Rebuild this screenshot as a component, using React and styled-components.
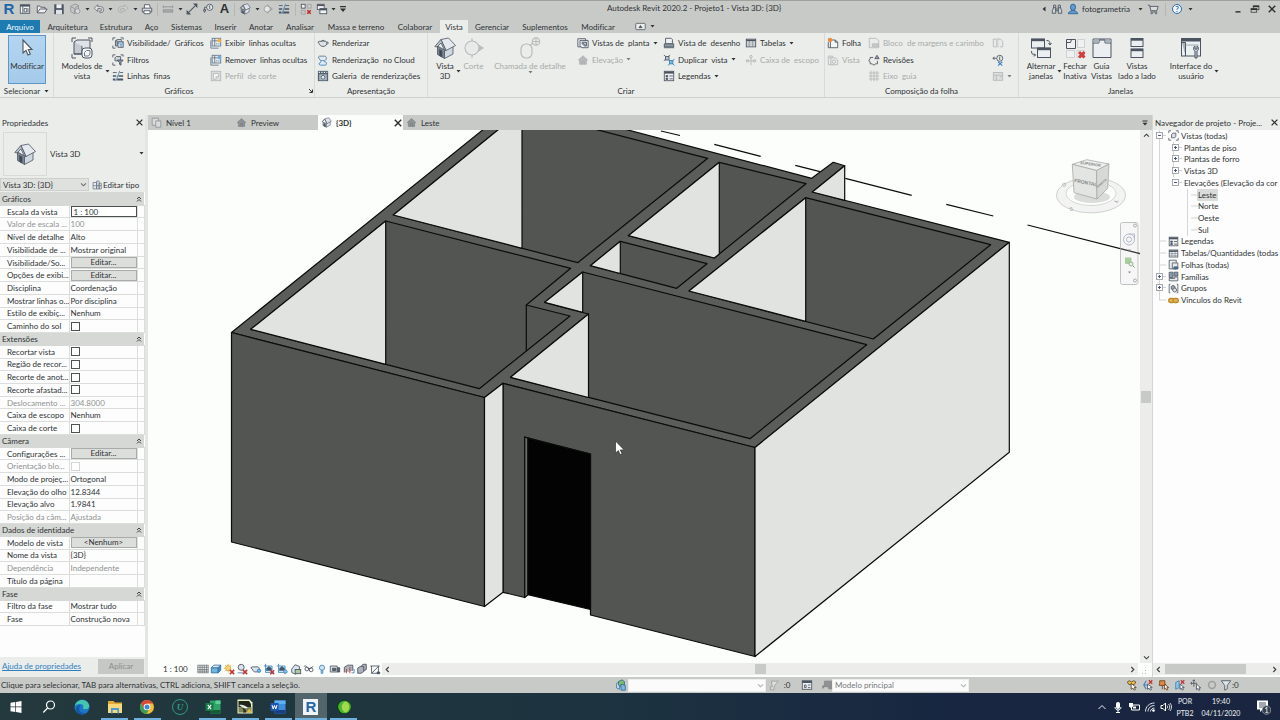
import React from 'react';
import styled, { createGlobalStyle, css } from 'styled-components';

const Global = createGlobalStyle`
  *, *::before, *::after { box-sizing: border-box; }
  body {
    margin: 0;
    background: #c8cac8;
    color: #2f3234;
    font-family: Lato, "Open Sans", "Noto Sans", sans-serif;
    font-size: 8px;
    font-variant-ligatures: none;
    line-height: 10px;
  }
  button, input, select { font: inherit; color: inherit; font-variant-ligatures: none; }
  button { margin: 0; padding: 0; border: 0; background: none; }
`;

/* ---------- icons ---------- */

const ink = '#4b5460';
const blue = '#3d83bd';
const pale = '#b4b8b8';

const HouseShape = ({ c = ink, f = '#dfe5ec', d = '#8d97a5' }) => (
  <g stroke={c} strokeWidth="0.7" strokeLinejoin="round">
    <path d="M2.5 6.5v4.3l4.3 2.2V8.2z" fill={d} />
    <path d="M6.8 8.2V13l5-2.6V6z" fill={f} />
    <path d="M1.2 6.2 4.8 2.2 10 1l3.2 4.4-5.6 2.9L5 3z" fill={f} />
    <path d="M4.8 2.4 7.4 8.2" fill="none" />
    <path d="M4 9v2.5l1.2.6V9.6z" fill={c} />
  </g>
);

const PageShape = ({ c = ink }) => (
  <path d="M4 3.5h5.5L12.5 6v6.5H4z M9.5 3.5V6h3" fill="#f4f6f6" stroke={c} strokeWidth="1" />
);

const icons = {
  recent: [14, <g fill="none" stroke={ink}><rect x="1.5" y="2" width="11" height="10" fill="#f3f5f6" /><path d="M1.5 3.2h11" strokeWidth="2" /><path d="M4.5 4v8M6 6.5h3v4H6zM10.5 6v5" /></g>],
  open: [14, <g stroke={ink} fill="#eef0f1"><path d="M1.5 11.5V3.5h3l1 1.5h5v2" /><path d="M1.5 11.5 4.5 7h8.500l-3 4.500z" /></g>],
  save: [14, <g><path d="M1.5 1.500h11v11.500h-11z" fill={ink} /><path d="M4 1.500h6V6H4z" fill="#eef0f1" /><path d="M3.500 8h7v5h-7z" fill="#dfe3e5" /></g>],
  cube: [14, <g fill="none" stroke="#8f9497"><path d="M2 4 7 1l4 2v6l-4.500 3.500L2 10z" fill="#c3c7c7" /><path d="M2 4l4.500 2.500L11 3M6.500 6.500v6" /><circle cx="10" cy="9.500" r="2.800" fill="#d9dbdb" /></g>],
  undo: [14, <path d="M1.500 6l4-4v2.300H9a3.400 3.400 0 0 1 0 7H8V9.300h1a1.400 1.400 0 0 0 0-2.800H5.500V10z" fill="#e9ebeb" stroke="#5c646c" strokeWidth="0.9" />],
  redo: [14, <path d="M12.500 6l-4-4v2.300H5a3.400 3.400 0 0 0 0 7h1V9.300H5a1.400 1.400 0 0 1 0-2.800h3.500V10z" fill="#d2d4d3" stroke="#a4a8a9" strokeWidth="0.9" />],
  print: [14, <g stroke={ink}><path d="M4 6V2h6l.8 4" fill="#fff" /><path d="M1.5 6h11v4.500h-11z" fill="#d7dbdd" /><path d="M3.500 9h7v3.500h-7z" fill="#fff" /></g>],
  measure: [14, <g stroke="#8b9093" fill="none"><path d="M1.500 4.500h11M1.500 3v3M12.500 3v3" /><rect x="1.500" y="8" width="11" height="2.600" fill="#a9adad" /></g>],
  dimension: [14, <g stroke={ink} fill={ink}><path d="M3 11 11 3" strokeWidth="1.200" /><path d="M1.500 10 4 12.500H1.500zM10 1.500h2.500V4z" strokeWidth="1.600" /></g>],
  tag: [14, <g stroke={ink} fill="none"><circle cx="9" cy="5" r="3.600" fill="#e8ebec" /><path d="M9 3v4M8 4l1-1M5.500 5H3v3.500M1.500 8 3 11 4.500 8z" /></g>],
  house: [14, <HouseShape />],
  homeTab: [14, <path d="M1.500 7 7 2l5.500 5H11v5H3V7z M6 12V8.500h2.400V12" fill="#8d9295" stroke="#74797c" strokeWidth="0.7" />],
  homePale: [14, <path d="M1.500 7 7 2l5.500 5H11v5H3V7z M6 12V8.500h2.400V12" fill="#b6baba" stroke="#a5a9a9" strokeWidth="0.7" />],
  diamond: [14, <g fill="none" stroke="#979c9d"><path d="M6 2l6 5-6 5" fill="#aeb2b2" /><circle cx="6" cy="7" r="3.600" fill="#e4e6e5" /></g>],
  thin: [14, <g stroke={ink}><path d="M1 3h4.500M9 3h4" strokeWidth="1" /><path d="M1 7h4M7.500 7H13" strokeWidth="1.800" /><path d="M1 11h3M6 11h7" strokeWidth="2.400" /><path d="M9 1 4.500 13" stroke={blue} strokeWidth="1" /></g>],
  closeWin: [14, <g fill="none" stroke={ink}><rect x="1.500" y="1.500" width="4.500" height="4.500" fill="#eef0f0" /><path d="M8.500 1.500H13V6H8.500zM1.500 8.500H6V13H1.500z" stroke="#9ba0a2" /><path d="m8.500 8.500 4 4m0-4-4 4" stroke="#c62828" strokeWidth="1.800" /></g>],
  switchWin: [14, <g fill="#f1f3f3" stroke={ink}><rect x="1.500" y="1.500" width="8" height="6" /><path d="M1.500 2.700h8" strokeWidth="1.800" /><rect x="4.500" y="6.500" width="8" height="6" /><path d="M4.500 7.700h8" strokeWidth="1.800" /></g>],
  customize: [14, <g fill="#2f3234"><path d="M3.500 3.500h7v1.400h-7zM3.500 6.500h7L7 10.500z" /></g>],
  binoculars: [14, <g fill="#ccd1d3" stroke={ink}><path d="M3 2.500h2.500V6H3zM8.500 2.500H11V6H8.500z" /><path d="M3 5.500 1.500 9v3h4V5.500zM11 5.500 12.500 9v3h-4V5.500z" /><path d="M5.500 7h3v2h-3z" /></g>],
  user: [14, <g fill="#5f9cd0" stroke="#2d5f93"><path d="M1.500 12.500c0-2.500 3-3 4-3.300V8h3v1.200c1 .3 4 .8 4 3.300z" /><ellipse cx="7" cy="5" rx="3" ry="3.700" /></g>],
  cart: [14, <g fill="#d8dcdd" stroke={ink}><path d="M1 2.500h2l1.500 6.500h7L13 4H3.500" /><path d="M4 10.500h8" /><circle cx="5.500" cy="12" r=".8" /><circle cx="10.500" cy="12" r=".8" /></g>],
  filterVG: [14, <g fill="none" stroke={ink}><path d="M1 4V1h3M10 1h3v2M1 10v3h3" /><path d="M4 4.500 6 3h5v1.500M4 4.500h2v6H4z" fill="#c9d3dc" /><rect x="7" y="5.500" width="6" height="6.500" fill="#eef1f4" /><path d="M7 7h6M9 9h3M9 10.700h3" stroke={blue} /></g>],
  filter: [14, <g fill="none" stroke={ink}><path d="M1 4V1h3M10 1h3v2M1 10v3h3" /><path d="M3.500 4.500 5 3h5v5H3.500z" fill="#cfd6dc" /><path d="M6 7h7L10.500 10v3L8.800 12v-2z" fill="#8694a4" /></g>],
  showLines: [14, <g fill="none" stroke="#60758a"><rect x="2.500" y="1.500" width="10" height="9" /><path d="M1 4v9h9M2.500 4.500h10M5.500 1.500v9" /><path d="M7 8h5" stroke={blue} strokeDasharray="1.500 1" /><circle cx="11" cy="4" r="2.200" fill="#f2ad3c" stroke="none" /></g>],
  hideLines: [14, <g fill="none" stroke="#60758a"><rect x="2.500" y="1.500" width="10" height="9" /><path d="M1 4v9h9M2.500 4.500h10M5.500 1.500v9" /><path d="M7 8h5" stroke={blue} strokeDasharray="1.500 1" /><circle cx="11" cy="4" r="2.200" fill="#74add8" stroke="none" /></g>],
  cutProfile: [14, <g fill="none" stroke={pale}><rect x="1.500" y="1.500" width="11" height="11" fill="#dcdedd" /><path d="M4 11V4h6v4H7v3z" fill="#f3f4f3" /></g>],
  render: [14, <g fill="#dce2e7" stroke={ink}><path d="M3 5h7c.8 0 1.500 1 1.500 2.500S10 11 7 11 3 9 2.500 7.500L1 6zM11 6c1.500-.5 2 0 2 1s-1 1.500-2 1.500" /><path d="M5 5c0-1.500 4-1.500 4 0" /></g>],
  cloud: [14, <g fill="#dfeaf4" stroke="#56718d"><path d="M3 2.500h6c1 0 2 1.200 2 2.500S9 8.500 7 8.500 3.500 7.500 3 6L1.500 3.500z" /><path d="M4 13c-2 0-2-3 0-3 0-2.500 4-3.500 4.500-1 3-.7 3.500 4 1 4z" stroke={blue} /></g>],
  gallery: [14, <g><path d="M1 1h12v12H1z" fill="#53616f" /><path d="M2 2h1.500v1.500H2zM5 2h1.500v1.500H5zM8 2h1.500v1.500H8zM11 2h1v1.500h-1z" fill="#e6eaec" /><path d="M2.500 5h9v7h-9z" fill="#a9b5c0" /><circle cx="7" cy="8.500" r="2.200" fill="#e6eaec" stroke="#53616f" /></g>],
  plan: [14, <g fill="#eef1f3" stroke={ink}><path d="M1 2h9v9.500H1z" /><path d="M3.500 4H13v8.500H5.500L3.500 10z" /><path d="M6 6h5v4.500H9L6 8z" fill="#b7c3cd" /><path d="m6 6 4.500 4.500" stroke="#617080" /></g>],
  drafting: [14, <g fill="#eef1f3" stroke={ink}><path d="M3 1.500h6.500L11 3v5H3z" /><path d="M1.500 8h11v3.500h-11z" fill="#8e9aa6" /><path d="M1 12.500h12" /></g>],
  duplicate: [14, <g fill="none" stroke={ink}><path d="m1 1 2.500 2.500M8 1 6 3.500M1 8l2-2" /><rect x="3" y="3" width="4" height="4" fill="#b8c4cf" /><rect x="7.500" y="7.500" width="4" height="4" fill="#7cb4e0" stroke={blue} /><path d="m13.500 6-2 1.500M6 13.500l1.500-2M13.500 13.500l-2-2M6 6l1.500 1.500" stroke={blue} /></g>],
  legend: [14, <g fill="#eef1f3" stroke={ink}><rect x="1.500" y="1.500" width="11" height="11" /><path d="M1.500 3h11" strokeWidth="2.400" /><path d="M3.500 6.500h2v1.500h-2zM3.500 9.500h2V11h-2z" fill={ink} /><path d="M7.500 7h4M7.500 10.300h4" /></g>],
  table: [14, <g fill="#eef1f3" stroke={ink}><rect x="1.500" y="2.500" width="11" height="9" /><path d="M1.500 4h11" strokeWidth="2" /><path d="M5 4v7.500M1.500 7h11M1.500 9.300h11M9 4v7.500" strokeWidth="0.500" /></g>],
  scopeBox: [14, <g fill="none" stroke={pale}><path d="M1 8h12M7 3v10" /><circle cx="3" cy="8" r="1.500" /><circle cx="11" cy="8" r="1.500" /><circle cx="7" cy="3" r="1.500" /></g>],
  sheet: [14, <g><PageShape /><path d="M1.500 6v6.500H4" stroke={ink} fill="none" /><circle cx="3.500" cy="3.500" r="2.600" fill="#f08a3c" /></g>],
  viewPale: [14, <g fill="#e9ebea" stroke={pale}><path d="M1.500 2.500h5v2h-5zM1.500 5v7.500h7" /><path d="M4.500 4.500h5l3 2.500v5.500h-8z" /><circle cx="8" cy="9" r="2" /></g>],
  titleBlock: [14, <g fill="#e9ebea" stroke={pale}><path d="M1.500 1.500h8l3 3v8h-11z" /><path d="M5 8h7v3H5z" fill="#c8cbca" /></g>],
  revision: [14, <g fill="none" stroke={ink}><path d="M6 4H2.500v2c-2 .8-2 2.500 0 3v2.500H5c.8 1.800 2.800 1.800 3.500 0H11V8" /><path d="m10.500 1.500 2.500 4H8z" fill="#9aa3ac" /></g>],
  guideGrid: [14, <path d="M3.500 1v12M7 1v12M10.500 1v12M1 3.500h12M1 7h12M1 10.500h12" fill="none" stroke={pale} />],
  matchPale: [14, <g fill="#e9ebea" stroke={pale}><path d="M1.500 2.500h4v9h-4zM7 2.500h3l2.500 2.500v6.500H9" /><path d="M7 1v12" strokeDasharray="2 1" /></g>],
  viewRef: [14, <g fill="none" stroke={ink}><path d="M1 5h4M3 3.500 1 5l2 1.500" /><circle cx="9" cy="5" r="3.500" /><path d="M9 3v4" /><path d="m7 9 5 4.500M12 9l-5 4.500" stroke={blue} strokeWidth="1.300" /></g>],
  viewportPale: [14, <g fill="#dddfde" stroke={pale}><rect x="1.500" y="3" width="11" height="9" /><path d="M1.500 6h11M5 6v6M9 8h3" /></g>],
  x: [14, <path d="m2.500 2.500 9 9m0-9-9 9" stroke="#2c2e30" strokeWidth="2" />],
  minimize: [14, <path d="M3.500 11h7" stroke="#2c2e30" strokeWidth="2" />],
  restore: [14, <g fill="none" stroke="#2c2e30"><rect x="4.500" y="2.500" width="8" height="5.500" /><path d="M4.500 3.500h8" strokeWidth="1.800" /><rect x="1.500" y="6.500" width="8" height="5" fill="#c8cac8" /><path d="M1.500 7.500h8" strokeWidth="1.800" /></g>],
  planTab: [14, <g fill="#d9dcdc" stroke="#8a8f92"><path d="M1.500 1.500h8v9h-8z" /><path d="M6 5h6.500v8H6z" /></g>],
  panelToggle: [14, <g fill="none" stroke="#4b5460"><rect x="1" y="3" width="12" height="8" rx="1" fill="#eceeed" /><path d="M5 8.500 7 5.800l2 2.700z" fill="#4b5460" /></g>],
  cursor: [22, <path d="M7 3v13l3-2.600 2 4.600 2.300-1-2-4.500H16z" fill="#fff" stroke="#50555b" strokeWidth="1.100" />],
  viewTemplate: [22, <g fill="none" stroke={ink}><path d="M1 5V1h4M17 1h4v4M1 17v4h4" /><path d="M3 5v12h8V5z" fill="#c3cad1" /><path d="M3 5l3-2h13v10M3 17h9" fill="#dfe3e7" /><rect x="11" y="11" width="10" height="10" rx="3" fill="#f4f6f7" /><path d="m13.500 15.500 2-2h3.500v3.500l-1.500 2h-4z" stroke="#707a84" /></g>],
  bigHouse: [22, <g stroke={ink} strokeWidth="0.800" strokeLinejoin="round"><path d="M3.500 9v8.500l7 4V13z" fill="#7d8896" /><path d="M10.500 13v8.500l8.500-4.500V9z" fill="#cfd8e2" /><path d="M7 2.500 14.500 1 21.500 8.500 12 13.500z" fill="#e4e9ef" /><path d="m.8 9.500 6-7 5.200 11-1.500-.3L7 6l-4 4z" fill="#b8c2ce" /><path d="M5.500 12.500v6l2.500 1.400v-6z" fill="#3e4650" /></g>],
  section: [22, <g stroke="#b9bcbb" strokeWidth="1.100"><path d="M9 1v3l11 7-11 7v3" fill="#bec1c0" /><circle cx="9" cy="11" r="7" fill="#e8eae9" /></g>],
  callout: [22, <g fill="none" stroke="#b9bcbb" strokeWidth="1.200"><rect x="2" y="7" width="11" height="14" rx="5" /><circle cx="17" cy="4.500" r="3.700" /><path d="M11 8.500 14 6M13.500 4.500h7M17 1v7" /></g>],
  swapWin: [22, <g fill="#eceff1" stroke={ink}><rect x="1.500" y="2" width="13" height="9" /><path d="M1.500 3h13" strokeWidth="2.400" /><rect x="7.500" y="11" width="13" height="9.500" /><path d="M7.500 12h13" strokeWidth="2.400" /><path d="M16.500 3.500c3 0 3.500 1 3.500 4M1.500 14c0 3 1 4 4 4M18.500 6l1.500 2 1.500-2M4 16.500 5.500 18 4 19.500" fill="none" /></g>],
  closeInactive: [22, <g fill="#eef0f1" stroke={ink}><path d="M2.500 2.500h9v9h-9z" /><path d="M2.500 5.500h4l1-3" fill="none" /><path d="M13.500 2.500h7v8h-7zM2.500 13.500h8v7h-8zM13 13.500h7.500v7H13z" stroke="#cdd1d2" /><path d="m15 15 5.500 5.500m0-5.500L15 20.500" stroke="#cf3c3c" strokeWidth="3" /></g>],
  tabViews: [22, <g fill="#eceff1" stroke={ink}><path d="M2 2h18v18.500H2z" /><path d="M2 6h6V3h6v3h6" fill="none" /><path d="M2.500 2.500H8V5.500H2.500zM14.500 2.500h5v3h-5z" fill="#aab2ba" stroke="none" /></g>],
  tileViews: [22, <g fill="#eceff1" stroke={ink}><rect x="5" y="1.500" width="12" height="8" /><path d="M5 2.500h12" strokeWidth="2.400" /><rect x="5" y="12" width="12" height="8.500" /><path d="M5 13h12" strokeWidth="2.400" /></g>],
  userInterface: [22, <g fill="#eef1f3" stroke={ink}><rect x="1.500" y="1.500" width="19" height="17.500" /><path d="M1.500 3h19" strokeWidth="3" /><path d="M2 5.500h3.500V19" fill="#a9b3bd" /><path d="M5.500 8h13" stroke="#9aa5b0" /><path d="M15 21v-7c-2-1-2-4 0-5v3h2V9c2 1 2 4 0 5v7z" fill="#c9d4df" /></g>],
  typeEdit: [14, <g fill="#e7edf2" stroke="#607080"><path d="M1.500 3.500h5v9h-5zM6.500 1.500H10v11H6.500zM10 4.500h3v8h-3z" /><path d="M1.500 8H13" /></g>],
  views: [14, <g fill="none" stroke={ink}><path d="M1 4V1h3M10 1h3v3M1 10v3h3M10 13h3v-3" /><path d="M4.500 6 6 4h4v4L8.500 10h-4z" fill="#dbe0e5" /></g>],
  sheets: [14, <g fill="#e7ebee" stroke={ink}><path d="M1.500 1.500h9v11h-9z" /><path d="M5.500 5h7v7.500h-7z" /><path d="M7.500 10h5v2.500h-5z" fill={blue} /></g>],
  families: [14, <g fill="#8b99a8" stroke={ink}><path d="M1.500 1.500h5v7h-5zM8 1.500h4.500v5H8z" /><path d="M1.500 9.500h7v-2h4v5h-11z" fill="#e7ebee" /></g>],
  groups: [14, <g fill="#9aa6b2" stroke={ink}><path d="M3 1.500H1.500v11H3M11 1.500h1.500v11H11" fill="none" /><path d="M4 4.500 6.500 3 9 4.500v3L6.500 9 4 7.500z" /><circle cx="8.500" cy="9" r="2.500" fill="#dbe0e5" /></g>],
  links: [14, <g fill="#e3b65a" stroke="#c08a28" strokeWidth="1.800"><rect x="1" y="4.500" width="6.500" height="5" rx="2" /><rect x="6.500" y="4.500" width="6.500" height="5" rx="2" /></g>],
};

const Svg = styled.svg`
  display: block;
  flex: none;
  width: ${(p) => p.$s}px;
  height: ${(p) => p.$s}px;
`;

const Icon = ({ name, size = 12 }) => {
  const [box, art] = icons[name];
  return (
    <Svg $s={size} viewBox={`0 0 ${box} ${box}`} aria-hidden="true">{art}</Svg>
  );
};

const CaretSvg = styled.svg`
  display: block;
  flex: none;
  width: 5px;
  height: 3px;
  opacity: ${(p) => (p.$dim ? 0.6 : 1)};
`;
const Caret = ({ dim }) => (
  <CaretSvg viewBox="0 0 5 3" $dim={dim} aria-hidden="true"><path d="M0.500 0h4L2.500 2.500z" fill="#2f3234" /></CaretSvg>
);

const ChevSvg = styled.svg`
  display: block;
  flex: none;
  width: 7px;
  height: 7px;
  transform: rotate(${(p) => p.$turn}deg);
`;
const Chevron = ({ turn = 0, color = '#3c3f41' }) => (
  <ChevSvg viewBox="0 0 7 7" $turn={turn} aria-hidden="true"><path d="m1 2.300 2.500 2.500L6 2.300" fill="none" stroke={color} strokeWidth="1.100" /></ChevSvg>
);

/* ---------- shell ---------- */

const Shell = styled.div`
  display: flex;
  flex-direction: column;
  height: 100vh;
  min-height: 600px;
  border-top: 1px solid #9fa19f;
  overflow: hidden;
`;

const TitleBar = styled.header`
  display: flex;
  align-items: center;
  height: 16px;
  flex: none;
`;

const QuickAccess = styled.div`
  display: flex;
  align-items: center;
  width: 350px;
  padding-left: 1px;
`;

const ToolButton = styled.button`
  display: flex;
  align-items: center;
  justify-content: center;
  flex: none;
  width: ${(p) => p.$w}px;
  height: 16px;
`;

const ToolRule = styled.span`
  flex: none;
  width: 1px;
  height: 13px;
  margin: 0 2px;
  background: #b5b7b5;
`;

const LogoLetter = styled.span`
  color: #1f66a8;
  font: bold 15px/16px "Liberation Sans", sans-serif;
`;

const LetterA = styled.span`
  font: bold 13px/14px "Liberation Sans", sans-serif;
`;

const WindowTitle = styled.h1`
  flex: 1;
  margin: 0;
  padding-bottom: 3px;
  font-size: 8px;
  font-weight: 400;
  text-align: center;
  white-space: nowrap;
`;

const Account = styled.div`
  display: flex;
  align-items: center;
  width: 242px;
`;

const UserName = styled.span`
  width: 56px;
  padding-left: 1px;
`;

const HelpMark = styled.span`
  width: 10px;
  height: 10px;
  border: 1px solid #2d6ba6;
  border-radius: 50%;
  background: #f3f7fa;
  color: #2d6ba6;
  font-weight: 700;
  line-height: 8px;
`;

const Push = styled.span`
  flex: 1;
`;

const MenuTabs = styled.nav`
  display: flex;
  align-items: stretch;
  height: 16px;
  padding-top: 3px;
  flex: none;
`;

const MenuTab = styled.button`
  width: ${(p) => p.$w}px;
  flex: none;
  white-space: nowrap;
  display: flex;
  align-items: center;
  justify-content: center;
  ${(p) => p.$kind === 'file' && css`background: #1c7bb0; color: #f1f7fb;`}
  ${(p) => p.$kind === 'active' && css`background: #ebedeb;`}
`;

const MenuExtra = styled.button`
  display: flex;
  align-items: center;
  gap: 4px;
  margin-left: 13px;
`;

/* ---------- ribbon ---------- */

const Ribbon = styled.div`
  display: flex;
  flex: none;
  height: 65px;
  background: #ebedeb;
  border-bottom: 1px solid #cfd1cf;
`;

const OptionsBar = styled.div`
  flex: none;
  height: 17px;
  background: #ebedeb;
`;

const Group = styled.section`
  display: flex;
  flex-direction: column;
  flex: none;
  width: ${(p) => p.$w}px;
  border-right: 1px solid ${(p) => (p.$last ? 'transparent' : '#d9dbd9')};
`;

const GroupBody = styled.div`
  display: flex;
  height: 52px;
  padding: 2px 0 0 ${(p) => p.$pad || 0}px;
`;

const GroupLabel = styled.div`
  display: flex;
  align-items: center;
  justify-content: center;
  gap: 4px;
  height: 12px;
`;

const LabelText = styled.span`
  flex: ${(p) => (p.$wide ? 1 : 'none')};
  text-align: center;
`;

const BigButton = styled.button`
  display: flex;
  flex-direction: column;
  align-items: center;
  flex: none;
  width: ${(p) => p.$w}px;
  height: 49px;
  margin-right: ${(p) => p.$after || 0}px;
  padding-top: 2px;
  color: ${(p) => (p.$dim ? '#a7aaa9' : 'inherit')};
  ${(p) => p.$active && css`
    border: 1px solid #5f97c8;
    background: linear-gradient(#b4d5f1, #a5cbea);
    padding-top: 1px;
  `}
`;

const BigLabel = styled.span`
  display: flex;
  align-items: center;
  gap: 2px;
  margin-top: 2px;
  padding-left: ${(p) => (p.$arrow ? 7 : 0)}px;
  white-space: pre;
  text-align: center;
`;

const Column = styled.div`
  display: flex;
  flex-direction: column;
  justify-content: space-between;
  flex: none;
  width: ${(p) => p.$w}px;
  height: 49px;
`;

const SmallButton = styled.button`
  display: flex;
  align-items: center;
  gap: 3px;
  height: 16px;
  white-space: pre;
  color: ${(p) => (p.$dim ? '#a7aaa9' : 'inherit')};
`;

const SmallSpace = styled.span`
  height: 16px;
`;

const BodyRule = styled.span`
  width: 1px;
  height: 46px;
  background: #d3d5d3;
`;

const Small = ({ icon, label, arrow, dim, name }) => (
  <SmallButton $dim={dim} aria-label={name}>
    <Icon name={icon} />
    {label && <span>{label}</span>}
    {arrow && <Caret dim={dim} />}
  </SmallButton>
);

const Big = ({ icon, lines, w, after, arrow, below, dim, active }) => (
  <BigButton $w={w} $after={after} $dim={dim} $active={active}>
    <Icon name={icon} size={22} />
    <BigLabel $arrow={arrow}>
      <span>{lines.join('\n')}</span>
      {arrow && <Caret />}
    </BigLabel>
    {below && <Caret dim={dim} />}
  </BigButton>
);

/* ---------- workspace ---------- */

const Workspace = styled.main`
  display: grid;
  grid-template-columns: 148px minmax(0, 1fr) 128px;
  flex: 1;
  min-height: 0;
`;

const Panel = styled.aside`
  display: flex;
  flex-direction: column;
  min-width: 0;
  min-height: 0;
  background: #fcfdfc;
  border-${(p) => p.$edge}: ${(p) => (p.$edge === 'right' ? 3 : 1)}px solid ${(p) => (p.$edge === 'right' ? '#e4e6e4' : '#d5d7d5')};
`;

const PanelTitle = styled.div`
  display: flex;
  align-items: center;
  justify-content: space-between;
  flex: none;
  height: 15px;
  padding: 0 0 0 2px;
  background: #ebedeb;
  white-space: nowrap;
`;

const TypePicker = styled.div`
  display: flex;
  align-items: center;
  gap: 3px;
  flex: none;
  height: 47px;
  padding: 0 1px 0 3px;
  background: #ebedeb;
`;

const TypeThumb = styled.div`
  display: grid;
  place-items: center;
  width: 44px;
  height: 44px;
  border: 1px solid #d8dad8;
`;

const TypeName = styled.span`
  flex: 1;
`;

const InstanceRow = styled.div`
  display: flex;
  align-items: center;
  gap: 3px;
  flex: none;
  height: 15px;
  background: #ebedeb;
`;

const SelectWrap = styled.span`
  position: relative;
  display: block;
  width: ${(p) => p.$w}px;
  height: 13px;
  svg { position: absolute; right: 2px; top: 3px; pointer-events: none; }
`;

const SelectBox = styled.select`
  display: block;
  width: 100%;
  height: 13px;
  padding: 0 10px 0 2px;
  border: 1px solid ${(p) => (p.$plain ? '#eceeec' : '#cdcfcd')};
  border-radius: 0;
  background: ${(p) => (p.$plain ? '#fafbfa' : '#dfe1df')};
  color: ${(p) => (p.$plain ? '#77797a' : 'inherit')};
  line-height: 10px;
  appearance: none;
`;

const TypeEdit = styled.button`
  display: flex;
  align-items: center;
  gap: 1px;
  white-space: nowrap;
`;

const PropTable = styled.table`
  flex: none;
  width: 144px;
  height: 434px;
  border-collapse: collapse;
  table-layout: fixed;
  tr { height: 12px; }
`;

const SectionHead = styled.th`
  padding: 0 2px;
  border: 1px solid #d6d8d6;
  border-width: 1px 0;
  background: #d6d8d6;
  font-weight: 400;
  text-align: left;
`;

const SectionLine = styled.span`
  display: flex;
  align-items: center;
  justify-content: space-between;
`;

const PropName = styled.th`
  padding: 0 0 0 7px;
  border: 1px solid #dcdedc;
  border-left: 0;
  color: ${(p) => (p.$dim ? '#8f9292' : 'inherit')};
  font-weight: 400;
  text-align: left;
  white-space: nowrap;
`;

const PropValue = styled.td`
  padding: 0 0 0 1px;
  border: 1px solid #dcdedc;
  color: ${(p) => (p.$dim ? '#8f9292' : 'inherit')};
  white-space: nowrap;
`;

const PropEnd = styled.td`
  padding: 0;
  border: 1px solid #dcdedc;
`;

const EditButton = styled.button`
  display: block;
  width: 100%;
  height: 11px;
  border: 1px solid #a9abaa;
  background: #dcdedc;
  line-height: 9px;
`;

const ScaleInput = styled.input`
  display: block;
  width: 100%;
  height: 11px;
  padding: 0 2px;
  border: 1px solid #4c4f50;
  background: #fff;
`;

const Tick = styled.input`
  display: block;
  width: 9px;
  height: 9px;
  margin: 0;
  border: 1px solid #4e5152;
  background: #fff;
  appearance: none;
  &:disabled { border-color: #d4d6d4; }
`;

const PanelFoot = styled.div`
  display: flex;
  align-items: center;
  justify-content: space-between;
  flex: none;
  height: 20px;
  margin-top: auto;
  padding: 0 1px 2px 2px;
  background: #ebedeb;
`;

const HelpLink = styled.a`
  color: #2f7fc0;
`;

const ApplyButton = styled.button`
  width: 46px;
  height: 15px;
  background: #c6c8c6;
  color: #8b8d8d;
`;

const ViewArea = styled.section`
  display: flex;
  flex-direction: column;
  min-width: 0;
  min-height: 0;
  background: #fcfefc;
`;

const DocTabs = styled.div`
  display: flex;
  flex: none;
  height: 15px;
  background: #c8cac8;
`;

const DocTab = styled.button`
  display: flex;
  align-items: center;
  gap: 4px;
  width: 85px;
  padding: 0 0 0 3px;
  text-align: left;
  ${(p) => p.$active && css`background: #fcfefc; font-weight: 700;`}
`;

const ViewRow = styled.div`
  display: flex;
  flex: 1;
  min-height: 0;
`;

const Stage = styled.div`
  position: relative;
  flex: 1;
  min-width: 0;
  overflow: hidden;
`;

const ModelSvg = styled.svg`
  display: block;
  width: 100%;
  height: 100%;
`;

const ViewTools = styled.div`
  position: absolute;
  top: 25px;
  right: 0;
  width: 86px;
`;

const VScroll = styled.div`
  display: flex;
  flex-direction: column;
  align-items: center;
  justify-content: space-between;
  width: 12px;
  padding: 2px 0;
  background: #ececeb;
`;

const VThumb = styled.span`
  width: 10px;
  height: 12px;
  background: #c8cac8;
`;

const BarRow = styled.div`
  display: flex;
  align-items: center;
  flex: none;
  height: 14px;
  padding: 0 0 2px ${(p) => p.$pad || 0}px;
`;

const ScaleText = styled.button`
  width: 33px;
  text-align: left;
  white-space: nowrap;
`;

const ControlButtons = styled.div`
  display: grid;
  grid-template-columns: repeat(14, 1fr);
  justify-items: center;
  width: 186px;
`;

const HScroll = styled.div`
  display: flex;
  align-items: center;
  justify-content: space-between;
  flex: 1;
  height: 12px;
  padding: 0 2px;
  background: #ececeb;
`;

const HThumb = styled.span`
  width: ${(p) => p.$w}px;
  height: 10px;
  background: #c8cac8;
  margin-right: ${(p) => p.$after || 0}px;
`;

const Grip = styled.span`
  width: 14px;
  height: 12px;
  background: radial-gradient(circle, #a9abaa 1px, transparent 1px) 0 0 / 3px 3px;
  clip-path: polygon(70% 20%, 70% 90%, 10% 90%);
`;

const Tree = styled.ul`
  display: flex;
  flex-direction: column;
  flex: none;
  height: 176px;
  margin: 0;
  padding: 0 0 0 2px;
  list-style: none;
  overflow: hidden;
`;

const guide = 'linear-gradient(#d5d7d6, #d5d7d6)';
const TreeItem = styled.li`
  display: flex;
  align-items: center;
  flex: 1;
  gap: ${(p) => (p.$tight ? 0 : 2)}px;
  padding-left: ${(p) => p.$indent}px;
  white-space: nowrap;
  background-image: ${(p) => [guide, p.$deep && guide].filter(Boolean).join(', ')};
  background-repeat: no-repeat;
  background-size: 1px ${(p) => (p.$end ? '50%' : '100%')};
  background-position: 4px 0, ${(p) => p.$deep || 0}px 0;
`;

const TreeLabel = styled.span`
  background: ${(p) => (p.$on ? '#d9dbda' : 'none')};
  outline: ${(p) => (p.$on ? '1px solid #d9dbda' : 'none')};
`;

const StatusBar = styled.footer`
  display: flex;
  align-items: center;
  flex: none;
  height: 16px;
  padding: 0 0 0 1px;
  white-space: nowrap;
`;

const Hint = styled.span`
  width: 613px;
`;

const Slot = styled.span`
  display: flex;
  align-items: center;
  justify-content: center;
  flex: none;
  width: ${(p) => p.$w}px;
`;

const Taskbar = styled.footer`
  display: flex;
  align-items: stretch;
  flex: none;
  height: 27px;
  background: linear-gradient(90deg, #23393d, #1d3440 45%, #182641 75%, #1a2540);
  color: #eef2f4;
`;

const TaskApps = styled.div`
  display: grid;
  grid-template-columns: repeat(11, 1fr);
  width: 360px;
`;

const TaskButton = styled.button`
  display: grid;
  place-items: center;
  background: ${(p) => (p.$active ? '#52656b' : 'none')};
  box-shadow: ${(p) => (p.$open ? 'inset 0 -2px 0 #6fb1de' : 'none')};
  margin: 0 ${(p) => (p.$active ? 0 : 3)}px;
`;

const TaskSvg = styled.svg`
  display: block;
  width: 16px;
  height: 16px;
`;

const RevitBadge = styled.span`
  width: 15px;
  height: 16px;
  background: #f0f4f8;
  color: #2267a9;
  font: bold 15px/16px "Liberation Sans", sans-serif;
`;

const TaskLetter = styled.span`
  font: italic bold 9px/14px "Liberation Serif", serif;
  width: 16px;
  height: 16px;
  border: 1px solid #2f9a84;
  border-radius: 50%;
  color: #2f9a84;
`;

const Tray = styled.div`
  display: flex;
  align-items: center;
  margin-left: auto;
`;

const TrayText = styled.div`
  width: ${(p) => p.$w}px;
  font-size: 7px;
  line-height: 12px;
  text-align: center;
`;

/* ---------- data ---------- */

const quick = [
  ['recent', 16, 'Início'], ['open', 18, 'Abrir'], ['save', 16, 'Salvar'], ['cube', 16, 'Sincronizar'], [null, 9],
  ['undo', 14, 'Desfazer'], [null, 9], ['redo', 16, 'Refazer'], [null, 8], ['print', 16, 'Imprimir'], 'rule',
  ['measure', 16, 'Medir'], [null, 9], ['dimension', 14, 'Cota'], ['tag', 18, 'Identificador'], ['A', 15, 'Texto'], 'rule',
  ['house', 16, 'Vista 3D'], [null, 8], ['diamond', 14, 'Corte'], ['thin', 18, 'Linhas finas'], 'rule',
  ['closeWin', 16, 'Fechar inativas'], ['switchWin', 16, 'Alternar janelas'], [null, 6], ['customize', 14, 'Personalizar'],
];

const menu = [
  ['Arquivo', 40, 'file'], ['Arquitetura', 55], ['Estrutura', 42], ['Aço', 29], ['Sistemas', 41], ['Inserir', 37],
  ['Anotar', 34], ['Analisar', 44], ['Massa e terreno', 68], ['Colaborar', 50], ['Vista', 28, 'active'],
  ['Gerenciar', 48], ['Suplementos', 58], ['Modificar', 48],
];

const props = [
  { head: 'Gráficos' },
  { n: 'Escala da vista', scale: true },
  { n: 'Valor de escala ...', v: '100', dim: true },
  { n: 'Nível de detalhe', v: 'Alto' },
  { n: 'Visibilidade de ...', v: 'Mostrar original' },
  { n: 'Visibilidade/So...', btn: 'Editar...' },
  { n: 'Opções de exibi...', btn: 'Editar...' },
  { n: 'Disciplina', v: 'Coordenação' },
  { n: 'Mostrar linhas o...', v: 'Por disciplina' },
  { n: 'Estilo de exibiç...', v: 'Nenhum' },
  { n: 'Caminho do sol', tick: true },
  { head: 'Extensões' },
  { n: 'Recortar vista', tick: true },
  { n: 'Região de recor...', tick: true },
  { n: 'Recorte de anot...', tick: true },
  { n: 'Recorte afastad...', tick: true },
  { n: 'Deslocamento ...', v: '304.8000', dim: true },
  { n: 'Caixa de escopo', v: 'Nenhum' },
  { n: 'Caixa de corte', tick: true },
  { head: 'Câmera' },
  { n: 'Configurações ...', btn: 'Editar...' },
  { n: 'Orientação blo...', tick: true, dim: true },
  { n: 'Modo de projeç...', v: 'Ortogonal' },
  { n: 'Elevação do olho', v: '12.8344' },
  { n: 'Elevação alvo', v: '1.9841' },
  { n: 'Posição da câm...', v: 'Ajustada', dim: true },
  { head: 'Dados de identidade' },
  { n: 'Modelo de vista', btn: '<Nenhum>' },
  { n: 'Nome da vista', v: '{3D}' },
  { n: 'Dependência', v: 'Independente', dim: true },
  { n: 'Título da página', v: '' },
  { head: 'Fase' },
  { n: 'Filtro da fase', v: 'Mostrar tudo' },
  { n: 'Fase', v: 'Construção nova' },
];

/* deep: x of the inner guide line of a nested row */
const tree = [
  { indent: 1, exp: '-', icon: 'views', text: 'Vistas (todas)' },
  { indent: 17, exp: '+', text: 'Plantas de piso', deep: 18 },
  { indent: 17, exp: '+', text: 'Plantas de forro', deep: 18 },
  { indent: 17, exp: '+', text: 'Vistas 3D', deep: 18 },
  { indent: 17, exp: '-', text: 'Elevações (Elevação da cor' },
  { indent: 33, text: 'Leste', deep: 32, on: true },
  { indent: 33, text: 'Norte', deep: 32 },
  { indent: 33, text: 'Oeste', deep: 32 },
  { indent: 33, text: 'Sul', deep: 32 },
  { indent: 1, icon: 'legend', text: 'Legendas' },
  { indent: 1, icon: 'table', text: 'Tabelas/Quantidades (todas' },
  { indent: 1, icon: 'sheets', text: 'Folhas (todas)' },
  { indent: 1, exp: '+', icon: 'families', text: 'Famílias' },
  { indent: 1, exp: '+', icon: 'groups', text: 'Grupos' },
  { indent: 1, icon: 'links', text: 'Vínculos do Revit', end: true },
];

/* view control and status glyphs, all on a 14 unit grid */
const glyph = {
  detail: <g fill="none" stroke="#5c6267" strokeWidth="0.800"><rect x="1" y="2.500" width="12" height="9" /><path d="M1 5h12M1 7.500h12M1 9.500h12M3.500 2.500v9M6 2.500v9M8.500 2.500v9M11 2.500v9" /></g>,
  style: <g stroke="#346f9e"><path d="M1.500 5.500h8v6h-8z" fill="#6fb5e3" /><path d="m1.500 5.500 3-3h8l-3 3z" fill="#dfeef8" /><path d="m9.500 5.500 3-3v6l-3 3z" fill="#3f8cc2" /></g>,
  sunOff: <g stroke="#e0a030" fill="#f8d977"><circle cx="6" cy="6" r="3" /><path d="M6 1v1.500M6 9.500V11M1 6h1.500M2.500 2.500l1 1M9.500 2.500l-1 1M2.500 9.500l1-1" /><path d="m8 8 5 5m0-5-5 5" stroke="#c63232" strokeWidth="1.800" /></g>,
  shadowOff: <g stroke={ink} fill="#dbe3ea"><circle cx="6" cy="5" r="3.500" /><path d="M2 11.500h6" stroke={blue} /><path d="m8 8 5 5m0-5-5 5" stroke="#c63232" strokeWidth="1.800" /></g>,
  renderDlg: <g stroke={ink} fill="#dbe3ea"><path d="M3 4.500h6c1 0 2 1.500 2 3s-1.500 3-4 3-3.500-1-4-3L1 5.500z" /><circle cx="10.500" cy="9" r="2" fill="#6fb5e3" stroke={blue} /></g>,
  cropOff: <g stroke={blue} fill="none"><path d="M3 1v10h10M1 3.500h9.500V13" /><path d="M4 9V6l3-2 3 2v3z" fill={ink} /><path d="m8.500 8.500 4.500 4.500m0-4.500L8.500 13" stroke="#c63232" strokeWidth="1.600" /></g>,
  crop: <g stroke={blue} fill="none"><path d="M3 1v10h10M1 3.500h9.500V13" /><path d="M4 9V6l3-2 3 2v3z" fill={ink} /><circle cx="11" cy="10" r="2" fill="#8dc5ea" /></g>,
  lock: <g stroke={ink} fill="#dbe3ea"><path d="M2 7 6 2l5 2v6l-5 3-4-2z" /><rect x="6" y="7.500" width="6.500" height="5" fill="#a9c99f" /></g>,
  glasses: <g stroke={ink} fill="none"><path d="M1 4.500c1-2 3-1 4 1l2 1.500 5-3" /><circle cx="4.500" cy="7" r="2.200" /><circle cx="9.500" cy="8" r="2.200" /></g>,
  bulb: <g stroke={blue} fill="#cde5f6"><circle cx="7" cy="5.500" r="3" /><path d="M6 9h2v3H6z" /></g>,
  worksharing: <g stroke={ink} fill="#e3e7ea"><path d="M1.500 3.500h8v7h-8z" /><path d="M9.500 5.500h3v5h-3M4 6h4v3H4z" fill="#555d66" /></g>,
  analytic: <g stroke={ink} fill="#aab2ba"><path d="M1.500 11V5l4-2.500h6V9" /><path d="M4 12V7M8 12V5" stroke="#c63232" /><path d="M10 11.500h3V7" stroke={blue} fill="none" /></g>,
  displace: <g stroke={ink} fill="#aab2ba"><path d="M2 6 5 4h4v6l-3 2H2zM6 4l2-2.500h4v6l-3 2" /></g>,
  reveal: <g stroke={ink} fill="none"><path d="M1.500 3.500h11M3 3.500V12h8V3.500M3 12l8-8" /><path d="M9.500 10.500h3v2h-3z" fill={ink} /></g>,
  worksets: <g stroke="#2f6f9d"><path d="M2 5 5 3v9l-3-1.500z" fill="#e7eef3" /><path d="m4 3 4-2 3 2v4L7 9 4 7z" fill="#7dbd68" /><path d="M7 6l5 1.500V13H7z" fill="#7cb9e2" /></g>,
  editable: <g stroke="#9a9d9d" fill="#dfe1e0"><path d="M4 2.500h8l-5 6v4H3V9h2z" /></g>,
  designOpt: <g stroke={ink} fill="#eef0f1"><rect x="1.500" y="2" width="11" height="10" /><path d="M1.500 3.500h11" strokeWidth="2.400" /><path d="M4 7h2v3H4zM8 7h3M8 10h3" /></g>,
  addOpt: <path d="M4 2.500h9v9H9V9H4l-2 2V8h2z" fill="#8f9292" stroke="#858888" />,
  selLinks: <g stroke="#55452a"><path d="M1.500 3.500 4 2l2.500 1.500L9 2l2.500 1.500-2 3h-6z" fill="#efc04a" /><path d="M6 5v7l2-1.500L9.500 13l1.500-.7L9.700 10H12z" fill="#fff" /></g>,
  selUnder: <g stroke={ink}><path d="m5 2-3 5 3 5M2 7h5" fill="none" stroke={blue} strokeWidth="1.300" /><path d="m8 1.500 4 4m0-4-4 4" stroke="#c63232" strokeWidth="1.500" /><path d="M6.500 6v6l1.700-1.300 1.300 2.300 1.500-.7L9.700 10H12z" fill="#fff" /></g>,
  selPin: <g stroke="#70421f"><path d="M2 2h6v3l1.500 2.500h-8L2 5zM5 7.500V12" fill="#e58a3c" /><path d="M7.500 6v6l1.500-1.300 1.200 2.300 1.300-.7-1.100-2.300h2.100z" fill="#fff" /></g>,
  selFace: <g stroke={ink}><path d="M2 4 6 2v8l-4 2z" fill="#8dc5ea" stroke={blue} /><path d="m8 1.500 4 4m0-4-4 4" stroke="#c63232" strokeWidth="1.500" /><path d="M7 6v6l1.500-1.300L9.700 13l1.300-.7L9.900 10H12z" fill="#fff" /></g>,
  drag: <g stroke={ink}><path d="M4.500 1v8M.8 5h7.500M3 2.500 4.500 1 6 2.500M2.300 3.500.8 5l1.500 1.500" fill="none" /><path d="M7.500 6v6.500L9 11l1.200 2.300 1.300-.7-1.100-2.300h2.100z" fill="#fff" /></g>,
  ring: <circle cx="7" cy="7" r="4" fill="none" stroke="#9c9f9f" strokeWidth="1.800" />,
  funnel: <path d="M1.500 2h11L8.500 7.500v4l-3 1.500V7.500z" fill="#dfe4e8" stroke={ink} />,
};
const Glyph = ({ name, size = 12 }) => (
  <Svg $s={size} viewBox="0 0 14 14" aria-hidden="true">{glyph[name]}</Svg>
);

const viewControls = ['detail', 'style', 'sunOff', 'shadowOff', 'renderDlg', 'cropOff', 'crop', 'lock', 'glasses', 'bulb', 'worksharing', 'analytic', 'displace', 'reveal'];

/* ---------- parts ---------- */

const Expander = ({ kind }) => (
  <Svg $s={10} viewBox="0 0 10 10" aria-hidden="true">
    {!kind ? (
      <path d="M3 5h7" fill="none" stroke="#c8cac9" strokeWidth="0.800" />
    ) : (
      <g fill="none" stroke="#9da0a3" strokeWidth="0.900">
        <rect x="0.500" y="1.500" width="6" height="6" fill="#fff" />
        <path d={kind === '+' ? 'M2 4.500h3M3.500 3v3' : 'M2 4.500h3'} stroke="#3b4a78" />
        <path d="M7 4.500h3" stroke="#c8cac9" />
      </g>
    )}
  </Svg>
);

const DoubleChevron = () => (
  <Svg $s={6} viewBox="0 0 6 6" aria-hidden="true"><path d="m1 3 2-2 2 2M1 5.500l2-2 2 2" fill="none" stroke="#2f3234" strokeWidth="0.900" /></Svg>
);

const Model = () => (
  <ModelSvg viewBox="148 130 992 533" preserveAspectRatio="xMidYMid slice" role="img" aria-label="Modelo 3D">
    <g stroke="#0b0b0b" strokeWidth="1.200" strokeLinejoin="round">
      <path d="M661 131 680 135.500M714.300 144.300 760.700 156.300M795.300 165.300 820 171.700M845.300 178.300 911.700 195.300M946.300 204.300 993.300 216M1027.500 225 1140 253.700" />
      <path d="M231.500 332.500 495 120 590 120 811.700 178.300 833.300 162.300 844.700 165.700 812.300 192 1009.300 242.300 755 447.500 503 383.300 484.500 397.500z" fill="#5b5d5a" />
      <path d="M812.300 192 844.700 165.700V200.300z" fill="#e1e3e1" />

      <g fill="#535552">
        <path d="M393.300 215 522 110.400 707.700 158.300 577.700 262.700z" />
        <path d="M250.700 329.300 385.700 221 570.700 268.300 526.300 305 570 316 479.300 388.700z" />
        <path d="M544.700 302.300 582.700 272 866.700 344.700 750 438.700 510.500 377.300 588.500 314z" />
        <path d="M628.300 235.700 719.300 162.300 806 183.700 714.300 258z" />
        <path d="M590.300 265.700 620.300 241.300 707 263.700 676.700 288.300z" />
        <path d="M689 291 805.700 197.700 990.700 244.700 873.300 339z" />
        <path d="M231.500 332.500 484.500 397.500V606.500L231.500 542z" />
        <path d="M503 383.300 755 447.500V656.500L590.500 615V454L524.700 437V597.500L503 592.300z" />
      </g>
      <path d="M526.300 305V351" fill="none" />

      <g fill="#e1e3e1">
        <path d="M393.300 215 522 110.400V248.300z" />
        <path d="M250.700 329.300 385.700 221V364.300z" />
        <path d="M544.700 302.300 582.700 272V312.300z" />
        <path d="M510.500 377.300 588.500 314V397.500z" />
        <path d="M628.300 235.700 719.300 162.300V254L714.300 258z" />
        <path d="M590.300 265.700 620.300 241.300V273.500z" />
        <path d="M689 291 805.700 197.700V321.300z" />
        <path d="M484.500 397.500 503 383.300V592.300L484.500 606.500z" />
        <path d="M755 447.500 1009.300 242.300V452.300L755 656.500z" />
      </g>
      <path d="M524.700 437 528 438.200V594.700L524.700 597.500z" fill="#6a6c69" />
      <path d="M528 438.200 590.500 454V609.500L528 594.700z" fill="#020302" />
    </g>
    <path d="M615.500 441v12l2.800-2.400 1.800 4 2-.9-1.800-3.800h3.900z" fill="#fff" stroke="#333" strokeWidth="0.700" />
  </ModelSvg>
);

const CubeAndNav = () => (
  <ViewTools>
    <svg width="86" height="132" viewBox="1054 155 86 132" aria-hidden="true">
      <ellipse cx="1091" cy="195.300" rx="34.500" ry="17.500" fill="#f2f3f2" stroke="#cfd1cf" />
      <ellipse cx="1091" cy="193.500" rx="25" ry="12" fill="#fcfefc" stroke="#d6d8d6" />
      <ellipse cx="1092" cy="197" rx="18" ry="6" fill="#c3c5c3" opacity="0.600" />
      <g stroke="#a6a9a7" strokeWidth="0.800" strokeLinejoin="round">
        <path d="M1072.300 164.300 1086.700 159.700 1109 164 1096.500 170.500z" fill="#eff0ef" />
        <path d="M1072.300 164.300 1096.500 170.500 1097 199 1074 192.700z" fill="#e3e5e3" />
        <path d="M1096.500 170.500 1109 164 1107.700 188.300 1097 199z" fill="#d7d9d7" />
      </g>
      <g fill="#858886" fontFamily="Liberation Sans, sans-serif" fontWeight="700">
        <text x="1074" y="182" fontSize="5" transform="rotate(11 1074 182)">FRONTAL</text>
        <text x="1080" y="164" fontSize="4" transform="rotate(8 1080 164)">SUPERIOR</text>
        <text x="1098" y="188" fontSize="3" transform="rotate(-42 1098 188)">DIREITA</text>
        <text x="1063" y="187" fontSize="5" fontWeight="400" transform="rotate(-25 1063 187)">O</text>
        <text x="1070" y="211" fontSize="5" fontWeight="400" transform="rotate(-15 1070 211)">S</text>
        <text x="1117" y="203" fontSize="5" fontWeight="400" transform="rotate(-60 1117 203)">L</text>
      </g>
      <rect x="1120.500" y="222.500" width="17.500" height="62" rx="2" fill="#f3f4f3" fillOpacity="0.850" stroke="#c1c3c2" />
      <path d="M1120.500 248.700 1140 253.700" stroke="#3a3c3b" strokeWidth="1.200" />
      <g fill="none" stroke="#a9aeb3">
        <circle cx="1135" cy="225.500" r="1.500" />
        <circle cx="1135" cy="280.500" r="1.500" />
        <circle cx="1129" cy="239.500" r="5.500" stroke="#b4bccb" />
        <circle cx="1129" cy="239.500" r="2.600" stroke="#b4bccb" />
        <path d="M1129 234h5.500v5.500" stroke="#b4bccb" />
      </g>
      <path d="M1125 257.500h6.500v6.500h-6.500z" fill="#a9cd9f" />
      <circle cx="1131" cy="264" r="2" fill="#e8f2e6" stroke="#7fa478" strokeWidth="0.800" />
      <path d="m1132.500 265.500 2 2" stroke="#7fa478" />
      <path d="M1128 249.500h3l-1.500 2zM1128 271.500h3l-1.500 2z" fill="#8b8e8d" />
    </svg>
  </ViewTools>
);

const PropRow = ({ row, id }) => (
  <tr>
    <PropName scope="row" $dim={row.dim}><label htmlFor={id}>{row.n}</label></PropName>
    <PropValue $dim={row.dim}>
      {row.scale && <ScaleInput id={id} defaultValue="1 : 100" />}
      {row.btn && <EditButton id={id}>{row.btn}</EditButton>}
      {row.tick && <Tick id={id} type="checkbox" disabled={row.dim} />}
      {row.v !== undefined && <output id={id}>{row.v}</output>}
    </PropValue>
    <PropEnd />
  </tr>
);

const taskApps = [
  ['Iniciar', <path d="M2.500 3.800 7.300 3v4.600H2.500zM8 2.900 13.500 2v5.600H8zM2.500 8.300h4.800V13l-4.800-.7zM8 8.300h5.500V14L8 13.100z" fill="#fff" />],
  ['Pesquisar', <g fill="none" stroke="#fff" strokeWidth="1.200"><circle cx="9.500" cy="6" r="4" /><path d="m6.600 9-4.300 4.500" /></g>],
  ['Edge', <g><circle cx="8" cy="8" r="7.500" fill="#1b78c9" /><path d="M.8 7C2 .5 12-1.500 15 5.500c1 3-1 5-4 4.800-2 0-2.500-1-1.800-2C10 6.500 8 4.500 5.500 5 3 5.300 1.500 6 .8 7z" fill="#43c5b0" /><path d="M5.500 8c-1.500 4 2.500 7.500 7.500 5.500C10 17 3 16 2 11c-.3-3 2-5.500 5-5-1 .5-1.500 1-1.500 2z" fill="#1456a0" /></g>],
  ['Explorador', <g><path d="M1 2h5.500L8 3.500h7V14H1z" fill="#e3a83a" /><path d="M1 5h14v9H1z" fill="#f8d878" /><path d="M4 9h8v5.500H10.300V11H5.700v3.500H4z" fill="#4a9cd8" /></g>, true],
  ['Chrome', <g><circle cx="8" cy="8" r="7" fill="#f2c02f" /><path d="M8 1a7 7 0 0 1 6.100 3.500H8L5 9.500 1.900 4.500A7 7 0 0 1 8 1z" fill="#d9493a" /><path d="M1.900 4.500A7 7 0 0 0 7.500 15l3-5.300L5 9.500z" fill="#3a9e55" /><circle cx="8" cy="8" r="3.300" fill="#fff" /><circle cx="8" cy="8" r="2.500" fill="#4285e0" /></g>, true],
  ['U', null],
  ['Excel', <g><path d="M5 1.500h10.500v13H5z" fill="#2fa468" /><path d="M10.500 1.500h5V5h-5z" fill="#5bd095" /><path d="M5 11h10.500v3.500H5z" fill="#155c37" /><path d="M0.500 4h8v8h-8z" fill="#157a46" /><path d="m2.800 5.800 3.400 4.400m0-4.400-3.400 4.400" stroke="#fff" strokeWidth="1.100" /></g>, true],
  ['Imagem', <g><path d="M.5 .5h12l3 3v11H.5z" fill="#f2f0c8" /><path d="M1.500 2h10.500l2 3v3H1.500z" fill="#1e2618" /><path d="M1.500 8h13v5.500h-13z" fill="#7c8658" /><path d="M2 6c3-1 7 1 9 3-3 .5-5 0-9-3z" fill="#e9eef0" /><path d="M3 9c3 0 4 2 3 4.500h3c1-3-2-5-6-4.500z" fill="#2c3322" /><path d="m9.500 13.500 3-4 2 4z" fill="#e8bd3d" /></g>, true],
  ['Word', <g><path d="M4.500 1.500h11v13h-11z" fill="#3d8ede" /><path d="M4.500 1.500h11V5h-11z" fill="#5fb1f1" /><path d="M4.500 11h11v3.500h-11z" fill="#173f87" /><path d="M0.500 4h8v8h-8z" fill="#1b55ad" /><path d="m2 6 1.200 4L4.500 6.500 5.800 10 7 6" fill="none" stroke="#fff" /></g>, true],
  ['Revit', null, true],
  ['Camtasia', <g><circle cx="8" cy="8" r="7.200" fill="#133a1d" /><circle cx="8.500" cy="8" r="6.300" fill="#46b52f" /><path d="M9.500 2.500c-5 2-5 9 0 11 5-1.500 5-9.500 0-11z" fill="#a5d84a" /></g>, true],
];

const TrayIcon = ({ children, w = 16 }) => (
  <Slot $w={w}><Svg $s={12} viewBox="0 0 12 12" aria-hidden="true">{children}</Svg></Slot>
);

export default function App() {
  return (
    <Shell>
      <Global />
      <TitleBar>
        <QuickAccess>
          <ToolButton $w={16} aria-label="Revit"><LogoLetter>R</LogoLetter></ToolButton>
          {quick.map((q, i) => {
            if (q === 'rule') return <ToolRule key={i} />;
            const [name, w, label] = q;
            return (
              <ToolButton key={i} $w={w} aria-label={label || 'Mais opções'}>
                {name === null ? <Caret /> : name === 'A' ? <LetterA>A</LetterA> : <Icon name={name} />}
              </ToolButton>
            );
          })}
        </QuickAccess>
        <WindowTitle>Autodesk Revit 2020.2 - Projeto1 - Vista 3D: {'{3D}'}</WindowTitle>
        <Account>
          <ToolButton $w={12} aria-label="Recolher">
            <Svg $s={6} viewBox="0 0 6 6"><path d="M4.500 0.500v5L1.500 3z" fill="#2f3234" /></Svg>
          </ToolButton>
          <ToolButton $w={14} aria-label="Localizar"><Icon name="binoculars" /></ToolButton>
          <ToolButton $w={17} aria-label="Conta"><Icon name="user" /></ToolButton>
          <UserName>fotogrametria</UserName>
          <ToolButton $w={6} aria-label="Opções da conta"><Caret /></ToolButton>
          <ToolButton $w={20} aria-label="Loja"><Icon name="cart" /></ToolButton>
          <ToolRule />
          <ToolButton $w={18} aria-label="Ajuda"><HelpMark>?</HelpMark></ToolButton>
          <ToolButton $w={8} aria-label="Opções de ajuda"><Caret /></ToolButton>
          <Push />
          <ToolButton $w={16} aria-label="Minimizar"><Icon name="minimize" size={10} /></ToolButton>
          <ToolButton $w={17} aria-label="Restaurar"><Icon name="restore" size={10} /></ToolButton>
          <ToolButton $w={17} aria-label="Fechar"><Icon name="x" size={10} /></ToolButton>
        </Account>
      </TitleBar>

      <MenuTabs>
        {menu.map(([t, w, kind]) => <MenuTab key={t} $w={w} $kind={kind}>{t}</MenuTab>)}
        <MenuExtra aria-label="Minimizar faixa"><Icon name="panelToggle" size={11} /><Caret /></MenuExtra>
      </MenuTabs>

      <Ribbon>
        <Group $w={54}>
          <GroupBody $pad={8}>
            <Big icon="cursor" w={38} lines={['Modificar']} active />
          </GroupBody>
          <GroupLabel>Selecionar <Caret /></GroupLabel>
        </Group>

        <Group $w={261}>
          <GroupBody $pad={5}>
            <Big icon="viewTemplate" w={46} after={7} lines={['Modelos de', 'vista']} arrow />
            <Column $w={98}>
              <Small icon="filterVG" label="Visibilidade/  Gráficos" />
              <Small icon="filter" label="Filtros" />
              <Small icon="thin" label="Linhas  finas" />
            </Column>
            <Column $w={100}>
              <Small icon="showLines" label="Exibir  linhas ocultas" />
              <Small icon="hideLines" label="Remover  linhas ocultas" />
              <Small icon="cutProfile" label="Perfil  de corte" dim />
            </Column>
          </GroupBody>
          <GroupLabel>
            <LabelText $wide>Gráficos</LabelText>
            <Svg $s={6} viewBox="0 0 6 6" aria-hidden="true"><path d="m1 1 3 3M4.500 1.500v3h-3" fill="none" stroke="#2f3234" /></Svg>
          </GroupLabel>
        </Group>

        <Group $w={113}>
          <GroupBody $pad={2}>
            <Column $w={110}>
              <Small icon="render" label="Renderizar" />
              <Small icon="cloud" label="Renderização  no Cloud" />
              <Small icon="gallery" label="Galeria  de renderizações" />
            </Column>
          </GroupBody>
          <GroupLabel>Apresentação</GroupLabel>
        </Group>

        <Group $w={397}>
          <GroupBody $pad={1}>
            <Big icon="bigHouse" w={32} lines={['Vista', '3D']} arrow />
            <Big icon="section" w={25} lines={['Corte']} dim />
            <Big icon="callout" w={88} after={3} lines={['Chamada de detalhe']} dim below />
            <Column $w={86}>
              <Small icon="plan" label="Vistas de  planta" arrow />
              <Small icon="homePale" label="Elevação" arrow dim />
              <SmallSpace />
            </Column>
            <Column $w={82}>
              <Small icon="drafting" label="Vista de  desenho" />
              <Small icon="duplicate" label="Duplicar  vista" arrow />
              <Small icon="legend" label="Legendas" arrow />
            </Column>
            <Column $w={78}>
              <Small icon="table" label="Tabelas" arrow />
              <Small icon="scopeBox" label="Caixa de  escopo" dim />
              <SmallSpace />
            </Column>
          </GroupBody>
          <GroupLabel>Criar</GroupLabel>
        </Group>

        <Group $w={194}>
          <GroupBody $pad={2}>
            <Column $w={41}>
              <Small icon="sheet" label="Folha" />
              <Small icon="viewPale" label="Vista" dim />
              <SmallSpace />
            </Column>
            <Column $w={124}>
              <Small icon="titleBlock" label="Bloco  de margens e carimbo" dim />
              <Small icon="revision" label="Revisões" />
              <Small icon="guideGrid" label="Eixo  guia" dim />
            </Column>
            <Column $w={22}>
              <Small icon="matchPale" name="Linha de correspondência" dim />
              <Small icon="viewRef" name="Referência de vista" />
              <Small icon="viewportPale" name="Viewports" arrow dim />
            </Column>
          </GroupBody>
          <GroupLabel>Composição da folha</GroupLabel>
        </Group>

        <Group $w={204} $last>
          <GroupBody $pad={2}>
            <Big icon="swapWin" w={40} lines={['Alternar', 'janelas']} arrow />
            <Big icon="closeInactive" w={28} lines={['Fechar', 'Inativa']} />
            <Big icon="tabViews" w={25} lines={['Guia', 'Vistas']} />
            <Big icon="tileViews" w={46} lines={['Vistas', 'lado a lado']} />
            <BodyRule />
            <Big icon="userInterface" w={62} lines={['Interface do', 'usuário']} arrow />
          </GroupBody>
          <GroupLabel>Janelas</GroupLabel>
        </Group>
      </Ribbon>
      <OptionsBar />

      <Workspace>
        <Panel $edge="right">
          <PanelTitle>Propriedades<ToolButton $w={12} aria-label="Fechar propriedades"><Icon name="x" size={9} /></ToolButton></PanelTitle>
          <TypePicker>
            <TypeThumb><Icon name="bigHouse" size={22} /></TypeThumb>
            <TypeName>Vista 3D</TypeName>
            <Caret />
          </TypePicker>
          <InstanceRow>
            <SelectWrap $w={89}>
              <SelectBox aria-label="Vista" defaultValue="v"><option value="v">Vista 3D: {'{3D}'}</option></SelectBox>
              <Chevron color="#6d7071" />
            </SelectWrap>
            <TypeEdit><Icon name="typeEdit" size={10} />Editar tipo</TypeEdit>
          </InstanceRow>
          <PropTable>
            <colgroup><col style={{ width: 69 }} /><col style={{ width: 68 }} /><col style={{ width: 7 }} /></colgroup>
            <tbody>
              {props.map((row, i) => row.head ? (
                <tr key={i}><SectionHead colSpan={3}><SectionLine>{row.head}<DoubleChevron /></SectionLine></SectionHead></tr>
              ) : <PropRow key={i} row={row} id={`prop-${i}`} />)}
            </tbody>
          </PropTable>
          <PanelFoot>
            <HelpLink href="#ajuda">Ajuda de propriedades</HelpLink>
            <ApplyButton>Aplicar</ApplyButton>
          </PanelFoot>
        </Panel>

        <ViewArea>
          <DocTabs>
            <DocTab><Icon name="planTab" size={11} />Nível 1</DocTab>
            <DocTab><Icon name="homeTab" size={11} />Preview</DocTab>
            <DocTab $active><Icon name="house" size={11} />{'{3D}'}<Push /><Icon name="x" size={10} /></DocTab>
            <DocTab><Icon name="homeTab" size={11} />Leste</DocTab>
            <Push />
            <ToolButton $w={14} aria-label="Lista de guias"><Icon name="customize" size={10} /></ToolButton>
          </DocTabs>
          <ViewRow>
            <Stage><Model /><CubeAndNav /></Stage>
            <VScroll><Chevron turn={180} /><VThumb /><Chevron /></VScroll>
          </ViewRow>
          <BarRow $pad={15}>
            <ScaleText>1 : 100</ScaleText>
            <ControlButtons>
              {viewControls.map((n) => <ToolButton key={n} $w={13} aria-label={n}><Glyph name={n} /></ToolButton>)}
            </ControlButtons>
            <HScroll><Chevron turn={90} /><HThumb $w={11} /><Chevron turn={-90} /></HScroll>
            <Grip />
          </BarRow>
        </ViewArea>

        <Panel $edge="left">
          <PanelTitle>Navegador de projeto - Proje...<ToolButton $w={12} aria-label="Fechar navegador"><Icon name="x" size={9} /></ToolButton></PanelTitle>
          <Tree>
            {tree.map(({ indent, exp, icon, text, on, deep, end }) => (
              <TreeItem key={text} $indent={indent} $deep={deep} $end={end} $tight={deep === 32}>
                <Expander kind={exp} />
                {icon && <Icon name={icon} size={11} />}
                <TreeLabel $on={on}>{text}</TreeLabel>
              </TreeItem>
            ))}
          </Tree>
          <Push />
          <BarRow>
            <HScroll><Chevron turn={90} /><HThumb $w={81} $after={22} /><Chevron turn={-90} /></HScroll>
          </BarRow>
        </Panel>
      </Workspace>

      <StatusBar>
        <Hint>Clique para selecionar, TAB para alternativas, CTRL adiciona, SHIFT cancela a seleção.</Hint>
        <Slot $w={14}><Glyph name="worksets" /></Slot>
        <SelectWrap $w={138}>
          <SelectBox $plain aria-label="Conjunto de trabalho" defaultValue=""><option value=""> </option></SelectBox>
          <Chevron color="#b0b2b1" />
        </SelectWrap>
        <Slot $w={16}><Glyph name="editable" /></Slot>
        <Slot $w={10}>:0</Slot>
        <Slot $w={30}><Glyph name="designOpt" /></Slot>
        <Slot $w={10}><Glyph name="addOpt" /></Slot>
        <SelectWrap $w={137}>
          <SelectBox $plain aria-label="Opção de projeto" defaultValue="m"><option value="m">Modelo principal</option></SelectBox>
          <Chevron color="#b0b2b1" />
        </SelectWrap>
        <Push />
        {['selLinks', 'selUnder', 'selPin', 'selFace', 'drag', 'ring'].map((n) => <Slot key={n} $w={16}><Glyph name={n} /></Slot>)}
        <Slot $w={12}><Glyph name="funnel" /></Slot>
        <Slot $w={48}><LabelText>:0</LabelText><Push /></Slot>
      </StatusBar>

      <Taskbar>
        <TaskApps>
          {taskApps.map(([name, art, open]) => (
            <TaskButton key={name} aria-label={name} $open={open} $active={name === 'Revit'}>
              {name === 'Revit' && <RevitBadge>R</RevitBadge>}
              {name === 'U' && <TaskLetter>U</TaskLetter>}
              {art && <TaskSvg viewBox="0 0 16 16">{art}</TaskSvg>}
            </TaskButton>
          ))}
        </TaskApps>
        <Tray>
          <TrayIcon><path d="m2.500 8 3.500-3.500L9.500 8" fill="none" stroke="#eef2f4" /></TrayIcon>
          <TrayIcon><rect x="4" y="1" width="4" height="7" rx="2" fill="#fff" /><path d="M3 6c0 4 6 4 6 0M6 9v2.500M4 11.500h4" fill="none" stroke="#fff" /></TrayIcon>
          <TrayIcon><path d="M3.500 4h8v5h-8z" fill="none" stroke="#fff" /><path d="M5 5.500h3v2H5zM1 2h4v3.500L3 7 1 5.500z" fill="#fff" /></TrayIcon>
          <TrayIcon><path d="M1.500 10.500c0-5 4-8.500 9-8.500M4 10.500C4 7 7 4.500 10.500 4.500M6.500 10.500c0-2 2-3.500 4-3.500" fill="none" stroke="#dfe5e8" /><circle cx="9.500" cy="9.500" r="1.300" fill="#fff" /></TrayIcon>
          <TrayIcon><path d="M1 4.500h2L5.500 2v8L3 7.500H1z" fill="none" stroke="#fff" /><path d="M7 4.500c.8 1 .8 2 0 3M8.500 3c1.700 2 1.700 4 0 6M10 2c2 2.500 2 5.500 0 8" fill="none" stroke="#fff" strokeWidth="0.800" /></TrayIcon>
          <TrayText $w={22}>POR<br />PTB2</TrayText>
          <TrayText $w={50}>19:40<br />04/11/2020</TrayText>
          <Slot $w={34}>
            <TaskSvg viewBox="0 0 16 16">
              <path d="M2 1.500h11v9H7.500L5 13v-2.500H2z" fill="#fff" />
              <path d="M4 4h7M4 6h7M4 8h5" stroke="#1a2540" strokeWidth="0.800" />
              <circle cx="11.500" cy="11" r="4.300" fill="#333c4a" stroke="#aab2ba" strokeWidth="0.700" />
              <text x="11.500" y="13.500" textAnchor="middle" fontSize="7" fill="#fff">1</text>
            </TaskSvg>
          </Slot>
        </Tray>
      </Taskbar>
    </Shell>
  );
}
